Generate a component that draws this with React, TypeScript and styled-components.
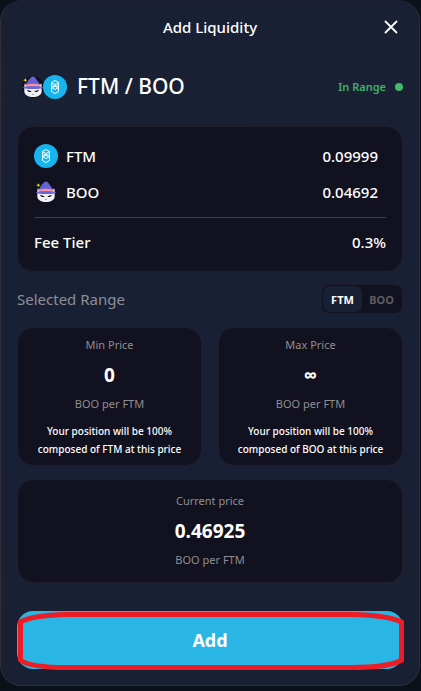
import React, { useState } from "react";
import styled, { createGlobalStyle } from "styled-components";

const GlobalStyle = createGlobalStyle`
  *, *::before, *::after { box-sizing: border-box; }
  body {
    margin: 0;
    background: #0b1119;
    color: #fff;
    font-family: "Noto Sans", "Open Sans", sans-serif;
  }
  button { font-family: inherit; border: 0; cursor: pointer; }
  h1, h2, h3, p, dl, dt, dd { margin: 0; font-weight: inherit; }
`;

const Modal = styled.main`
  display: flex;
  flex-direction: column;
  margin: 0 1px 5px 0;
  padding: 0 16px 16px;
  border: 1px solid #312f3c;
  border-top-color: #1c2030;
  border-radius: 21px;
  background: linear-gradient(#1a2034, #182036 45%, #1a2034);
`;

const Header = styled.header`
  display: grid;
  grid-template-columns: 24px 1fr 24px;
  align-items: center;
  height: 52px;
`;

const Title = styled.h1`
  grid-column: 2;
  font-size: 15px;
  line-height: 24px;
  font-weight: 500;
  text-align: center;
`;

const CloseButton = styled.button`
  display: grid;
  place-items: center;
  width: 24px;
  height: 24px;
  padding: 0;
  background: none;
  color: #fff;
`;

const PairRow = styled.section`
  display: flex;
  align-items: center;
  height: 40px;
  margin: 14px 0 19px;
  padding-left: 4px;
`;

const PairIcons = styled.div`
  display: flex;
  margin-right: 10px;
  svg + svg { margin-left: -2px; }
`;

const PairName = styled.h2`
  flex: 1;
  padding-bottom: 2px;
  font-size: 21px;
  line-height: 32px;
  font-weight: 500;
`;

const Status = styled.span`
  display: flex;
  align-items: center;
  gap: 9px;
  font-size: 11px;
  line-height: 16px;
  font-weight: 600;
  color: #3fb068;
  &::after {
    content: "";
    width: 8px;
    height: 8px;
    border-radius: 50%;
    background: #45b86c;
  }
`;

const Card = styled.section`
  border: 1px solid #211e2c;
  border-radius: 16px;
  background: #12111f;
`;

const Amounts = styled(Card).attrs({ as: "dl" })`
  padding: 11px 16px 4px;
`;

const AmountRow = styled.div<{ $total?: boolean }>`
  display: flex;
  align-items: center;
  justify-content: space-between;
  height: ${(p) => (p.$total ? 50 : 36)}px;
  padding-right: ${(p) => (p.$total ? 0 : 8)}px;
  margin-top: ${(p) => (p.$total ? 7 : 0)}px;
  border-top: ${(p) => (p.$total ? "1px solid #3e3c4a" : "0")};
  font-size: 15px;
  line-height: 22px;
  font-weight: 500;
  dt { display: flex; align-items: center; gap: 8px; }
  dt, dd { padding-bottom: ${(p) => (p.$total ? 2 : 0)}px; }
`;

const RangeBar = styled.div`
  display: flex;
  align-items: center;
  justify-content: space-between;
  height: 30px;
  margin: 12px 0 13px;
`;

const RangeTitle = styled.h2`
  font-size: 15px;
  line-height: 24px;
  color: #8e8e93;
`;

const Toggle = styled.div`
  display: flex;
  height: 30px;
  padding: 1px;
  border: 1px solid #211e2c;
  border-radius: 8px;
  background: #12111f;
`;

const ToggleOption = styled.button<{ $active: boolean }>`
  width: 39px;
  padding: 0;
  border-radius: 7px;
  background: ${(p) => (p.$active ? "#182036" : "transparent")};
  color: ${(p) => (p.$active ? "#fff" : "#5c5c61")};
  font-size: 11px;
  font-weight: 700;
`;

const PriceGrid = styled.div`
  display: grid;
  grid-template-columns: 1fr 1fr;
  gap: 13px 16px;
`;

const PriceCard = styled(Card)<{ $wide?: boolean }>`
  grid-column: ${(p) => (p.$wide ? "1 / -1" : "auto")};
  padding: ${(p) => (p.$wide ? "12px 8px 13px" : "8px 8px 7px")};
  text-align: center;
`;

const Caption = styled.p`
  font-size: 11px;
  line-height: 18px;
  color: #8e8e93;
`;

const Price = styled.p`
  font-size: 19px;
  line-height: 24px;
  font-weight: 700;
  margin: 9px 0 8px;
`;

const Note = styled.p`
  margin-top: 9px;
  font-size: 10px;
  line-height: 18px;
  font-weight: 500;
`;

const AddButton = styled.button`
  position: relative;
  height: 58px;
  margin-top: 28px;
  border-radius: 16px;
  background: #29b6e4;
  color: #fff;
  font-size: 18px;
  line-height: 24px;
  font-weight: 700;
`;

const Outline = styled.svg`
  position: absolute;
  inset: 0;
  width: 100%;
  height: 100%;
  overflow: visible;
  pointer-events: none;
`;

function FtmIcon() {
  return (
    <svg width="24" height="24" viewBox="0 0 24 24" aria-hidden="true">
      <circle cx="12" cy="12" r="12" fill="#16b5ee" />
      <g fill="none" stroke="#f4fcff" strokeWidth="1" strokeLinejoin="round">
        <path d="M8.500 7.500 12 5.500l3.500 2v9L12 18.600l-3.500-2.100Z" />
        <path d="m8.500 7.500 3.500 2 3.500-2M8.500 12.500 12 10.500l3.500 2-3.500 2Z" />
        <path d="m8.500 9.200 7 4.200m0-4.200-7 4.200" strokeWidth=".7" />
      </g>
    </svg>
  );
}

function BooIcon() {
  return (
    <svg width="24" height="24" viewBox="0 0 24 24" aria-hidden="true">
      <circle cx="12" cy="12" r="11" fill="#11101c" />
      <path d="M3.500 8.500 6 10h12l2.500-1.500.2 8c0 3.500-4 5.500-8.700 5.500S3.300 20 3.300 16.500Z" fill="#f1f1f6" />
      <path d="m6 14.700 4.600 1.500c-.7 1.400-3.700 1.400-4.600-1.500Zm12 0-4.600 1.500c.7 1.400 3.700 1.400 4.600-1.500Z" fill="#16131f" />
      <path d="m11 19 1 .6 1-.6" fill="none" stroke="#777583" strokeWidth=".7" />
      <path d="M4.500 9.500 8 4.500Q11 .3 13.800 2.200L19.500 10l-.5 2H5Z" fill="#6562d4" />
      <path d="M5 9.400q7-1.500 14 0v2.200H5Z" fill="#ff8f9c" />
      <path d="M1.300 12.400q10.700-2.300 21.400 0-3 1.700-10.700 1.600T1.300 12.400Z" fill="#6865dc" />
      <path d="m4.300 3.300.6 1.300 1.400.6-1.400.6-.6 1.400-.6-1.400-1.400-.6 1.400-.6Z" fill="#f8e71c" />
    </svg>
  );
}

function CloseIcon() {
  return (
    <svg width="14" height="14" viewBox="0 0 14 14" aria-hidden="true">
      <path d="M1.500 1.500l11 11m0-11-11 11" stroke="currentColor" strokeWidth="1.800" strokeLinecap="round" />
    </svg>
  );
}

const amounts = [
  { token: "FTM", icon: <FtmIcon />, value: "0.09999" },
  { token: "BOO", icon: <BooIcon />, value: "0.04692" },
];

const prices = [
  { label: "Min Price", value: "0", token: "FTM" },
  { label: "Max Price", value: "∞", token: "BOO" },
];

export default function App() {
  const [selected, setSelected] = useState("FTM");

  return (
    <>
      <GlobalStyle />
      <Modal>
        <Header>
          <Title>Add Liquidity</Title>
          <CloseButton type="button" aria-label="Close"><CloseIcon /></CloseButton>
        </Header>
        <PairRow>
          <PairIcons><BooIcon /><FtmIcon /></PairIcons>
          <PairName>FTM / BOO</PairName>
          <Status>In Range</Status>
        </PairRow>
        <Amounts>
          {amounts.map((a) => (
            <AmountRow key={a.token}>
              <dt>{a.icon}{a.token}</dt>
              <dd>{a.value}</dd>
            </AmountRow>
          ))}
          <AmountRow $total>
            <dt>Fee Tier</dt>
            <dd>0.3%</dd>
          </AmountRow>
        </Amounts>
        <RangeBar>
          <RangeTitle>Selected Range</RangeTitle>
          <Toggle>
            {["FTM", "BOO"].map((t) => (
              <ToggleOption
                key={t}
                type="button"
                $active={selected === t}
                aria-pressed={selected === t}
                onClick={() => setSelected(t)}
              >
                {t}
              </ToggleOption>
            ))}
          </Toggle>
        </RangeBar>
        <PriceGrid>
          {prices.map((p) => (
            <PriceCard key={p.label}>
              <Caption>{p.label}</Caption>
              <Price>{p.value}</Price>
              <Caption>BOO per FTM</Caption>
              <Note>{`Your position will be 100% composed of ${p.token} at this price`}</Note>
            </PriceCard>
          ))}
          <PriceCard $wide>
            <Caption>Current price</Caption>
            <Price>0.46925</Price>
            <Caption>BOO per FTM</Caption>
          </PriceCard>
        </PriceGrid>
        <AddButton type="button">
          Add
          <Outline viewBox="0 0 386 58" preserveAspectRatio="none" aria-hidden="true">
            <path
              d="M50 3.500H335Q372 4.500 384.500 11V49Q372 56.500 335 56.500H40Q10 55 3.500 49V11Q14 4.500 50 3.500Z"
              fill="none"
              stroke="#ee1c24"
              strokeWidth="5"
              vectorEffect="non-scaling-stroke"
            />
          </Outline>
        </AddButton>
      </Modal>
    </>
  );
}
